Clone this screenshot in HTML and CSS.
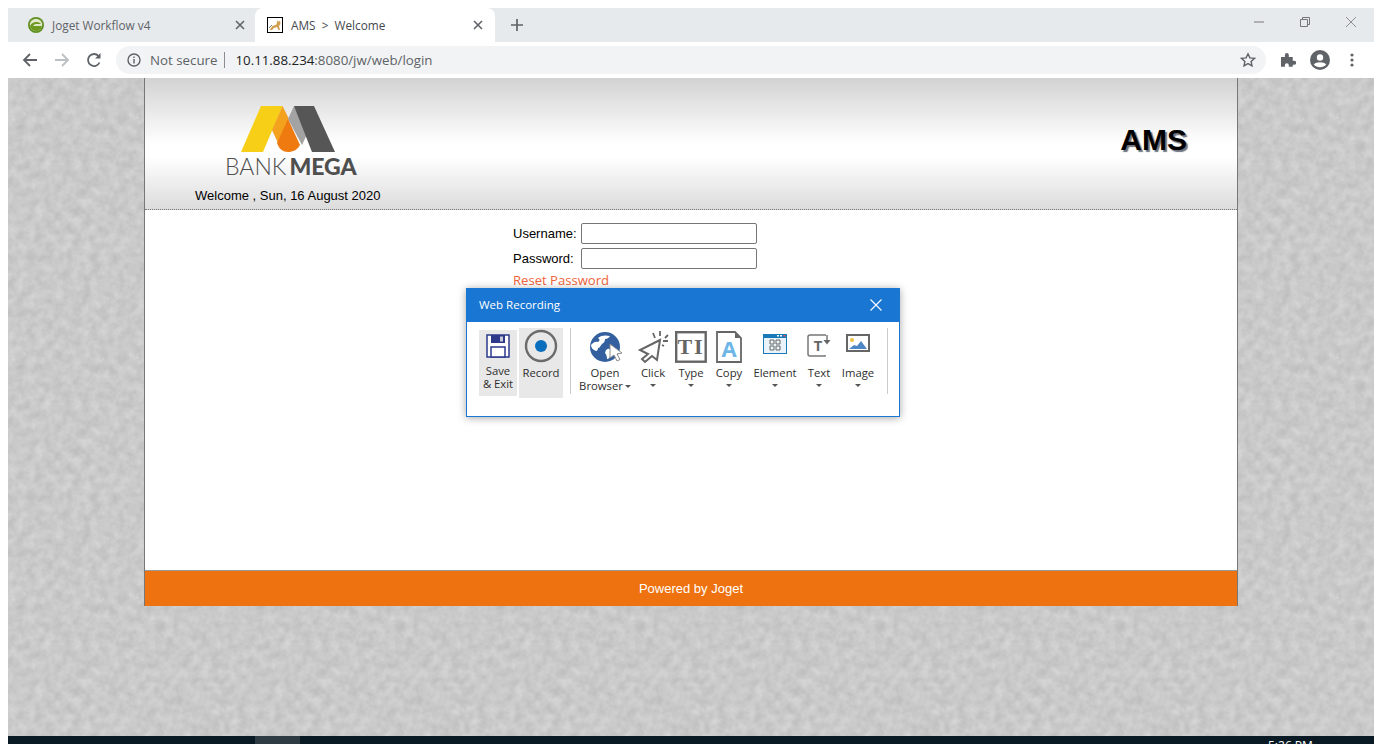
FILE: index.html
```html
<!DOCTYPE html>
<html lang="en">
  <head>
    <meta charset="UTF-8">
    <title>AMS &gt; Welcome</title>
    <link rel="stylesheet" href="styles.css">
  </head>
  <body>
    <div class="window">

      <div class="tabstrip">
        <div class="tab">
          <svg class="favicon" viewBox="0 0 16 16"><circle cx="8" cy="8" r="8" fill="#5f8f1e"/><circle cx="8" cy="8" r="6.200" fill="#dfe8c8"/><path d="M2 9.500C3 6 6 5 9 5c2 0 3 1 4 2H7l-2 2h9c-.5 3-3 5-6 5-3 0-5-2-6-4.500z" fill="#6f9a22"/></svg>
          <span class="tab-title">Joget Workflow v4</span>
          <svg class="tab-close" viewBox="0 0 10 10"><path d="M1 1l8 8M9 1l-8 8" stroke="#5f6368" stroke-width="1.6"/></svg>
        </div>
        <div class="tab tab-active">
          <svg class="favicon" viewBox="0 0 16 16"><rect x=".5" y=".5" width="15" height="15" fill="#fff" stroke="#000"/><path d="M2.500 13l3-4 4-1.500L10.500 3l1 1.500h1L13 3l.500 4-1.500 2 1 4h-1.500l-1.500-3-3 1-2 2z" fill="#d0a050"/><path d="M2 11l3-3" stroke="#777"/></svg>
          <span class="tab-title">AMS &nbsp;&gt;&nbsp; Welcome</span>
          <svg class="tab-close" viewBox="0 0 10 10"><path d="M1 1l8 8M9 1l-8 8" stroke="#5f6368" stroke-width="1.6"/></svg>
        </div>
        <svg class="new-tab" viewBox="0 0 12 12"><path d="M6 0v12M0 6h12" stroke="#5f6368" stroke-width="1.7"/></svg>
        <div class="win-controls">
          <svg viewBox="0 0 10 10"><path d="M0 5h10" stroke="#777"/></svg>
          <svg viewBox="0 0 10 10"><path d="M.5 2.5h7v7h-7zM2.5 2.500v-2h7v7h-2" fill="none" stroke="#777"/></svg>
          <svg viewBox="0 0 10 10"><path d="M0 0l10 10M10 0L0 10" stroke="#777" stroke-width=".8"/></svg>
        </div>
      </div>

      <div class="toolbar">
        <svg class="nav-icon" viewBox="0 0 16 16"><path d="M15 8H2M8 2L2 8l6 6" fill="none" stroke="#5f6368" stroke-width="1.8"/></svg>
        <svg class="nav-icon" viewBox="0 0 16 16"><path d="M1 8h13M8 2l6 6-6 6" fill="none" stroke="#bcbfc3" stroke-width="1.8"/></svg>
        <svg class="nav-icon" viewBox="0 0 16 16"><path d="M13.500 10.500A6 6 0 1 1 12.500 4" fill="none" stroke="#5f6368" stroke-width="1.8"/><path d="M14.500 1v5.500H9z" fill="#5f6368"/></svg>
        <div class="omnibox">
          <svg class="info-icon" viewBox="0 0 14 14"><circle cx="7" cy="7" r="6" fill="none" stroke="#5f6368" stroke-width="1.4"/><path d="M7 6v4.500M7 3.500v1.500" stroke="#5f6368" stroke-width="1.4"/></svg>
          <span class="not-secure">Not secure</span>
          <span class="omni-sep"></span>
          <span class="url"><b>10.11.88.234</b>:8080/jw/web/login</span>
          <svg class="star-icon" viewBox="0 0 16 16"><path d="M8 1.800l1.900 4.100 4.500.5-3.300 3 .9 4.400L8 11.600l-4 2.200.9-4.400-3.300-3 4.500-.5z" fill="none" stroke="#5f6368" stroke-width="1.400"/></svg>
        </div>
        <div class="tool-icons">
          <svg viewBox="0 0 16 16"><path d="M1 5h4V3a2 2 0 0 1 4 0v2h4v4h1.500a2 2 0 0 1 0 4H13v2H9v-1.500a2 2 0 0 0-4 0V15H1z" fill="#5f6368" transform="scale(.98)"/></svg>
          <svg viewBox="0 0 20 20"><circle cx="10" cy="10" r="10" fill="#5f6368"/><circle cx="10" cy="7.500" r="3.200" fill="#fff"/><path d="M3.800 14.500c2-3 10.400-3 12.400 0-3 3.500-9.400 3.500-12.400 0z" fill="#fff"/></svg>
          <svg viewBox="0 0 16 16"><circle cx="8" cy="3" r="1.600" fill="#5f6368"/><circle cx="8" cy="8" r="1.600" fill="#5f6368"/><circle cx="8" cy="13" r="1.600" fill="#5f6368"/></svg>
        </div>
      </div>

      <div class="page">
        <div class="card">
          <div class="card-header">
            <div class="brand">
              <svg class="logo" viewBox="0 0 131 50">
                <path d="M16 47L36 1h21.500L38 47z" fill="#f6cf16"/>
                <path d="M57.500 1L64 14 53 38l-6-13z" fill="#f4a11d"/>
                <path d="M69 1l-6 13 14 26 7-15z" fill="#a3a3a3"/>
                <path d="M63 14L52 38c2 6 6 9 11 9s9-2 12-7z" fill="#ee7a10"/>
                <path d="M69 1h20l21 46H87z" fill="#565656"/>
              </svg>
              <div class="bank-name"><span class="bank-thin">BANK</span><span class="bank-bold">MEGA</span></div>
              <div class="welcome">Welcome , Sun, 16 August 2020</div>
            </div>
            <div class="app-title">AMS</div>
          </div>
          <div class="card-body">
            <form class="login-form">
              <label>Username:</label>
              <input type="text">
              <label>Password:</label>
              <input type="password">
              <a class="reset-link">Reset Password</a>
            </form>
          </div>
          <div class="card-footer">Powered by Joget</div>
        </div>
      </div>

      <div class="taskbar">
        <span class="task-active"></span>
        <span class="task-clock">5:26 PM</span>
      </div>

      <div class="recorder">
        <div class="recorder-head">
          <span>Web Recording</span>
          <svg class="recorder-close" viewBox="0 0 12 12"><path d="M.5.500l11 11M11.500.500l-11 11" stroke="#fff" stroke-width="1.100"/></svg>
        </div>
        <div class="recorder-body">
          <div class="rec-btn btn-save">
            <svg class="save-icon" viewBox="0 0 24 24">
              <path d="M1 1h22v22H1z" fill="#fff" stroke="#2d3a8c" stroke-width="1.500"/>
              <path d="M5 1h14v8H5z" fill="#2d3a8c"/>
              <path d="M14 2.500h3v5h-3z" fill="#c8c8d8"/>
              <path d="M5 13h14v10H5z" fill="#fff" stroke="#2d3a8c" stroke-width="1.500"/>
            </svg>
            <span>Save<br>&amp; Exit</span>
          </div>
          <div class="rec-btn btn-record">
            <svg class="record-icon" viewBox="0 0 34 34">
              <circle cx="17" cy="17" r="15" fill="none" stroke="#6b6b6b" stroke-width="2.400"/>
              <circle cx="17" cy="17" r="6" fill="#0a6ebd"/>
            </svg>
            <span>Record</span>
          </div>
          <span class="rec-sep"></span>
          <div class="tools">
            <div class="tool">
              <svg viewBox="0 0 36 38">
                <circle cx="18" cy="19" r="15" fill="#34609f"/>
                <path d="M4 17c2-2 4-4 7-3 2-1 2-3 0-4 3-3 8-3 12-2-1 2-3 3-5 3 0 2-1 4-3 5-2 2-2 4-4 4 0 2-1 3-2 3-3-1-5-3-5-6zM19 22c2-1 3-2 5 0v5c-1 2-2 4-4 4 0-3-1-5-2-6z" fill="#fff"/>
                <path d="M23 16v14l4-3 3 6 3-1.500-3-5.500 5-1z" fill="#fff" stroke="#8a8a8a"/>
              </svg>
              <span>Open<br>Browser<i class="caret caret-inline"></i></span>
            </div>
            <div class="tool">
              <svg viewBox="0 0 36 38">
                <path d="M25 12L5 22l8 4-6 5 3 3 7-6 5 4z" fill="#fff" stroke="#666" stroke-width="2"/>
                <path d="M18 5l2 5M25 3v5M33 7l-3 3M33 13h-5M29 18l-2-1" stroke="#666" stroke-width="1.800"/>
              </svg>
              <span>Click</span><i class="caret"></i>
            </div>
            <div class="tool">
              <svg viewBox="0 0 36 38">
                <rect x="3.200" y="4.200" width="29.500" height="29.500" fill="#fff" stroke="#666" stroke-width="2.400"/>
                <text x="18" y="26" class="icon-type">TI</text>
              </svg>
              <span>Type</span><i class="caret"></i>
            </div>
            <div class="tool">
              <svg viewBox="0 0 36 38">
                <path d="M6 4h18l6 6v24H6z" fill="#fff" stroke="#666" stroke-width="1.800"/>
                <path d="M24 4v6h6z" fill="#666"/>
                <text x="18" y="29" class="icon-copy">A</text>
              </svg>
              <span>Copy</span><i class="caret"></i>
            </div>
            <div class="tool">
              <svg viewBox="0 0 36 38">
                <rect x="6" y="6" width="24" height="20" fill="#1a7ab8"/>
                <rect x="7" y="10" width="22" height="15" fill="#eaf3f9"/>
                <path d="M13 12h4v4h-4zM19 12h4v4h-4zM13 18h4v4h-4zM19 18h4v4h-4z" fill="none" stroke="#666"/>
                <path d="M20 7h2v1.500h-2zM23 7h2v1.500h-2z" fill="#fff"/>
                <path d="M26.500 7h2v1.500h-2z" fill="#e05050"/>
              </svg>
              <span>Element</span><i class="caret"></i>
            </div>
            <div class="tool">
              <svg viewBox="0 0 36 38">
                <path d="M25 7H9a2 2 0 0 0-2 2v17a2 2 0 0 0 2 2h15v-1" fill="none" stroke="#777" stroke-width="1.500"/>
                <path d="M26 7v6" stroke="#777" stroke-width="1.500"/>
                <path d="M22.500 12h7L26 16.500z" fill="#666"/>
                <text x="17" y="23" class="icon-text">T</text>
              </svg>
              <span>Text</span><i class="caret"></i>
            </div>
            <div class="tool">
              <svg viewBox="0 0 36 38">
                <rect x="7" y="7" width="22" height="16" fill="#fff" stroke="#666" stroke-width="2"/>
                <circle cx="12" cy="12" r="2" fill="#f0c040"/>
                <path d="M9 21l5-4 3 1 4-5 3 4 3 4z" fill="#4f86c6"/>
              </svg>
              <span>Image</span><i class="caret"></i>
            </div>
          </div>
          <span class="rec-sep rec-sep-end"></span>
        </div>
      </div>

    </div>
  </body>
</html>
```

FILE: styles.css
```css
html, body{
  overflow: hidden;
}
body{
  margin: 8px 8px 0 8px;
  background-color: #fff;
  font-family: "Liberation Sans", Arial, sans-serif;
}
.window{
  position: relative;
  height: 736px;
  display: flex;
  flex-direction: column;
  overflow: hidden;
}

/* browser chrome */
.tabstrip{
  height: 34px;
  flex: none;
  display: flex;
  align-items: center;
  background-color: #e7eaed;
  font-family: "Open Sans", sans-serif;
  font-size: 11.800px;
  color: #5f6368;
}
.tab{
  height: 34px;
  width: 247px;
  box-sizing: border-box;
  padding: 0 10px 0 20px;
  display: flex;
  align-items: center;
}
.tab-active{
  width: 240px;
  padding: 0 12px;
  background-color: #fff;
  border-radius: 8px 8px 0 0;
  color: #45494e;
}
.favicon{
  width: 16px;
  height: 16px;
  margin-right: 8px;
  flex: none;
}
.tab-title{
  flex: 1;
  white-space: nowrap;
}
.tab-close{
  width: 10px;
  height: 10px;
  flex: none;
}
.new-tab{
  width: 12px;
  height: 12px;
  margin-left: 16px;
}
.win-controls{
  margin-left: auto;
  display: flex;
  gap: 36px;
  padding-right: 18px;
  margin-top: -6px;
}
.win-controls svg{
  width: 10px;
  height: 10px;
  overflow: visible;
}
.toolbar{
  height: 36px;
  flex: none;
  box-sizing: border-box;
  display: flex;
  align-items: center;
  padding-left: 14px;
  background-color: #fff;
  font-family: "Open Sans", sans-serif;
}
.nav-icon{
  width: 16px;
  height: 16px;
  margin-right: 16px;
  flex: none;
}
.omnibox{
  width: 1150px;
  height: 28px;
  margin-left: -2px;
  padding: 0 11px;
  box-sizing: border-box;
  flex: none;
  display: flex;
  align-items: center;
  border-radius: 14px;
  background-color: #f1f3f4;
  font-size: 13.300px;
  color: #5f6368;
}
.info-icon{
  width: 14px;
  height: 14px;
  margin-right: 9px;
}
.omni-sep{
  width: 1px;
  height: 16px;
  margin: 0 10px 0 7px;
  background-color: #8a8d91;
}
.url b{
  font-weight: normal;
  color: #202124;
}
.star-icon{
  width: 16px;
  height: 16px;
  margin-left: auto;
  margin-right: -1px;
}
.tool-icons{
  display: flex;
  align-items: center;
  gap: 16px;
  margin-left: 14px;
}
.tool-icons svg{
  width: 16px;
  height: 16px;
}
.tool-icons svg:nth-child(2){
  width: 20px;
  height: 20px;
  margin-left: -2px;
  margin-right: -2px;
}

/* login page */
.page{
  height: 658px;
  flex: none;
  padding: 0 136px;
  background-color: #c9c9c9;
  background-image: url("data:image/svg+xml,%3Csvg xmlns='http://www.w3.org/2000/svg' width='240' height='240'%3E%3Cfilter id='n' x='0' y='0' width='100%25' height='100%25' color-interpolation-filters='sRGB'%3E%3CfeTurbulence type='fractalNoise' baseFrequency='.11' numOctaves='5' stitchTiles='stitch'/%3E%3CfeColorMatrix values='.13 0 0 0 .725 .13 0 0 0 .725 .13 0 0 0 .725 0 0 0 0 1'/%3E%3C/filter%3E%3Crect width='240' height='240' filter='url(%23n)'/%3E%3C/svg%3E");
}
.card{
  height: 528px;
  display: flex;
  flex-direction: column;
  border-left: 1px solid #777;
  border-right: 1px solid #777;
  background-color: #fff;
}
.card-header{
  height: 132px;
  flex: none;
  box-sizing: border-box;
  display: flex;
  justify-content: space-between;
  padding: 27px 50px 0 50px;
  border-bottom: 1px dotted #777;
  background: linear-gradient(#d2d2d2, #fff 50%, #fff 60%, #dcdcdc);
}
.brand{
  display: flex;
  flex-direction: column;
  align-items: flex-start;
}
.logo{
  width: 131px;
  height: 50px;
  margin-left: 30px;
}
.bank-name{
  margin-left: 30px;
  height: 23px;
  line-height: 23px;
  font-family: Lato, sans-serif;
  font-size: 23px;
  color: #4f4f4f;
  white-space: nowrap;
}
.bank-thin{
  font-weight: 300;
}
.bank-bold{
  margin-left: 3px;
  font-weight: 900;
}
.welcome{
  margin-top: 10px;
  font-size: 13px;
  line-height: 16px;
  color: #000;
}
.app-title{
  margin-top: 18px;
  font-size: 30px;
  font-weight: bold;
  line-height: 34px;
  color: #000;
  text-shadow: 2px 2px 1px #6d7480;
}
.card-body{
  flex: 1;
  padding: 13px 0 0 368px;
  border-bottom: 1px solid #999;
}
.login-form{
  display: grid;
  grid-template-columns: 68px 176px;
  row-gap: 4px;
  align-items: center;
  width: 244px;
  font-size: 13px;
  color: #000;
}
.login-form input{
  width: 176px;
  height: 21px;
  box-sizing: border-box;
  margin: 0;
  padding: 0 2px;
  border: 1px solid #767676;
  border-radius: 2px;
  background-color: #fff;
}
.reset-link{
  grid-column: 1 / 3;
  margin-top: -3px;
  font-family: "Open Sans", sans-serif;
  font-size: 13.100px;
  line-height: 20px;
  color: #f0643a;
}
.card-footer{
  height: 35px;
  flex: none;
  display: flex;
  align-items: center;
  justify-content: center;
  background-color: #ee7210;
  font-size: 13px;
  color: #fff;
}
.taskbar{
  height: 8px;
  flex: none;
  position: relative;
  background-color: #0a1a24;
  overflow: hidden;
}
.task-active{
  position: absolute;
  left: 247px;
  top: 0;
  width: 45px;
  height: 8px;
  background-color: #2f3b42;
}
.task-clock{
  position: absolute;
  left: 1260px;
  top: 2px;
  font-family: "Open Sans", sans-serif;
  font-size: 12px;
  line-height: 16px;
  color: #fff;
}

/* recorder dialog */
.recorder{
  position: absolute;
  left: 458px;
  top: 280px;
  width: 434px;
  height: 129px;
  box-sizing: border-box;
  border: 1px solid #1976d2;
  background-color: #fff;
  box-shadow: 0 1px 8px rgba(0, 0, 0, .35);
  font-family: "Open Sans", sans-serif;
  font-size: 11.300px;
  color: #2e2e2e;
}
.recorder-head{
  height: 33px;
  display: flex;
  align-items: center;
  justify-content: space-between;
  padding: 0 17px 2px 12px;
  box-sizing: border-box;
  background-color: #1976d2;
  color: #fff;
  font-size: 11.500px;
}
.recorder-close{
  width: 12px;
  height: 12px;
}
.recorder-body{
  display: flex;
  align-items: flex-start;
  padding: 6px 0 0 12px;
  line-height: 13px;
  text-align: center;
}
.rec-btn{
  display: flex;
  flex-direction: column;
  align-items: center;
  background-color: #e8e8e8;
}
.btn-save{
  width: 38px;
  height: 66px;
  margin-top: 2px;
}
.save-icon{
  width: 24px;
  height: 24px;
  margin: 4px 0 6px;
}
.btn-record{
  width: 44px;
  height: 70px;
  margin-left: 2px;
}
.record-icon{
  width: 34px;
  height: 34px;
  margin-top: 1px;
  margin-bottom: 3px;
}
.rec-sep{
  width: 1px;
  height: 66px;
  margin-left: 7px;
  background-color: #ccc;
}
.rec-sep-end{
  margin-left: 11px;
}
.tools{
  display: grid;
  grid-template-columns: 50px 46px 30px 46px 46px 42px 36px;
  margin-left: 9px;
}
.tool{
  display: flex;
  flex-direction: column;
  align-items: center;
}
.tool svg{
  width: 36px;
  height: 38px;
  flex: none;
}
.tool span{
  white-space: nowrap;
}
.caret{
  display: block;
  width: 0;
  height: 0;
  margin-top: 5px;
  border-left: 3px solid transparent;
  border-right: 3px solid transparent;
  border-top: 3px solid #555;
}
.caret-inline{
  display: inline-block;
  margin: 0 0 2px 2px;
}
.icon-type{
  font-family: "Liberation Serif", serif;
  font-size: 22px;
  font-weight: bold;
  text-anchor: middle;
  letter-spacing: 2px;
  fill: #666;
}
.icon-copy{
  font-family: "Open Sans", sans-serif;
  font-size: 22px;
  font-weight: bold;
  text-anchor: middle;
  fill: #6db6e6;
}
.icon-text{
  font-family: "Liberation Mono", monospace;
  font-size: 15px;
  font-weight: bold;
  text-anchor: middle;
  fill: #666;
}
```
